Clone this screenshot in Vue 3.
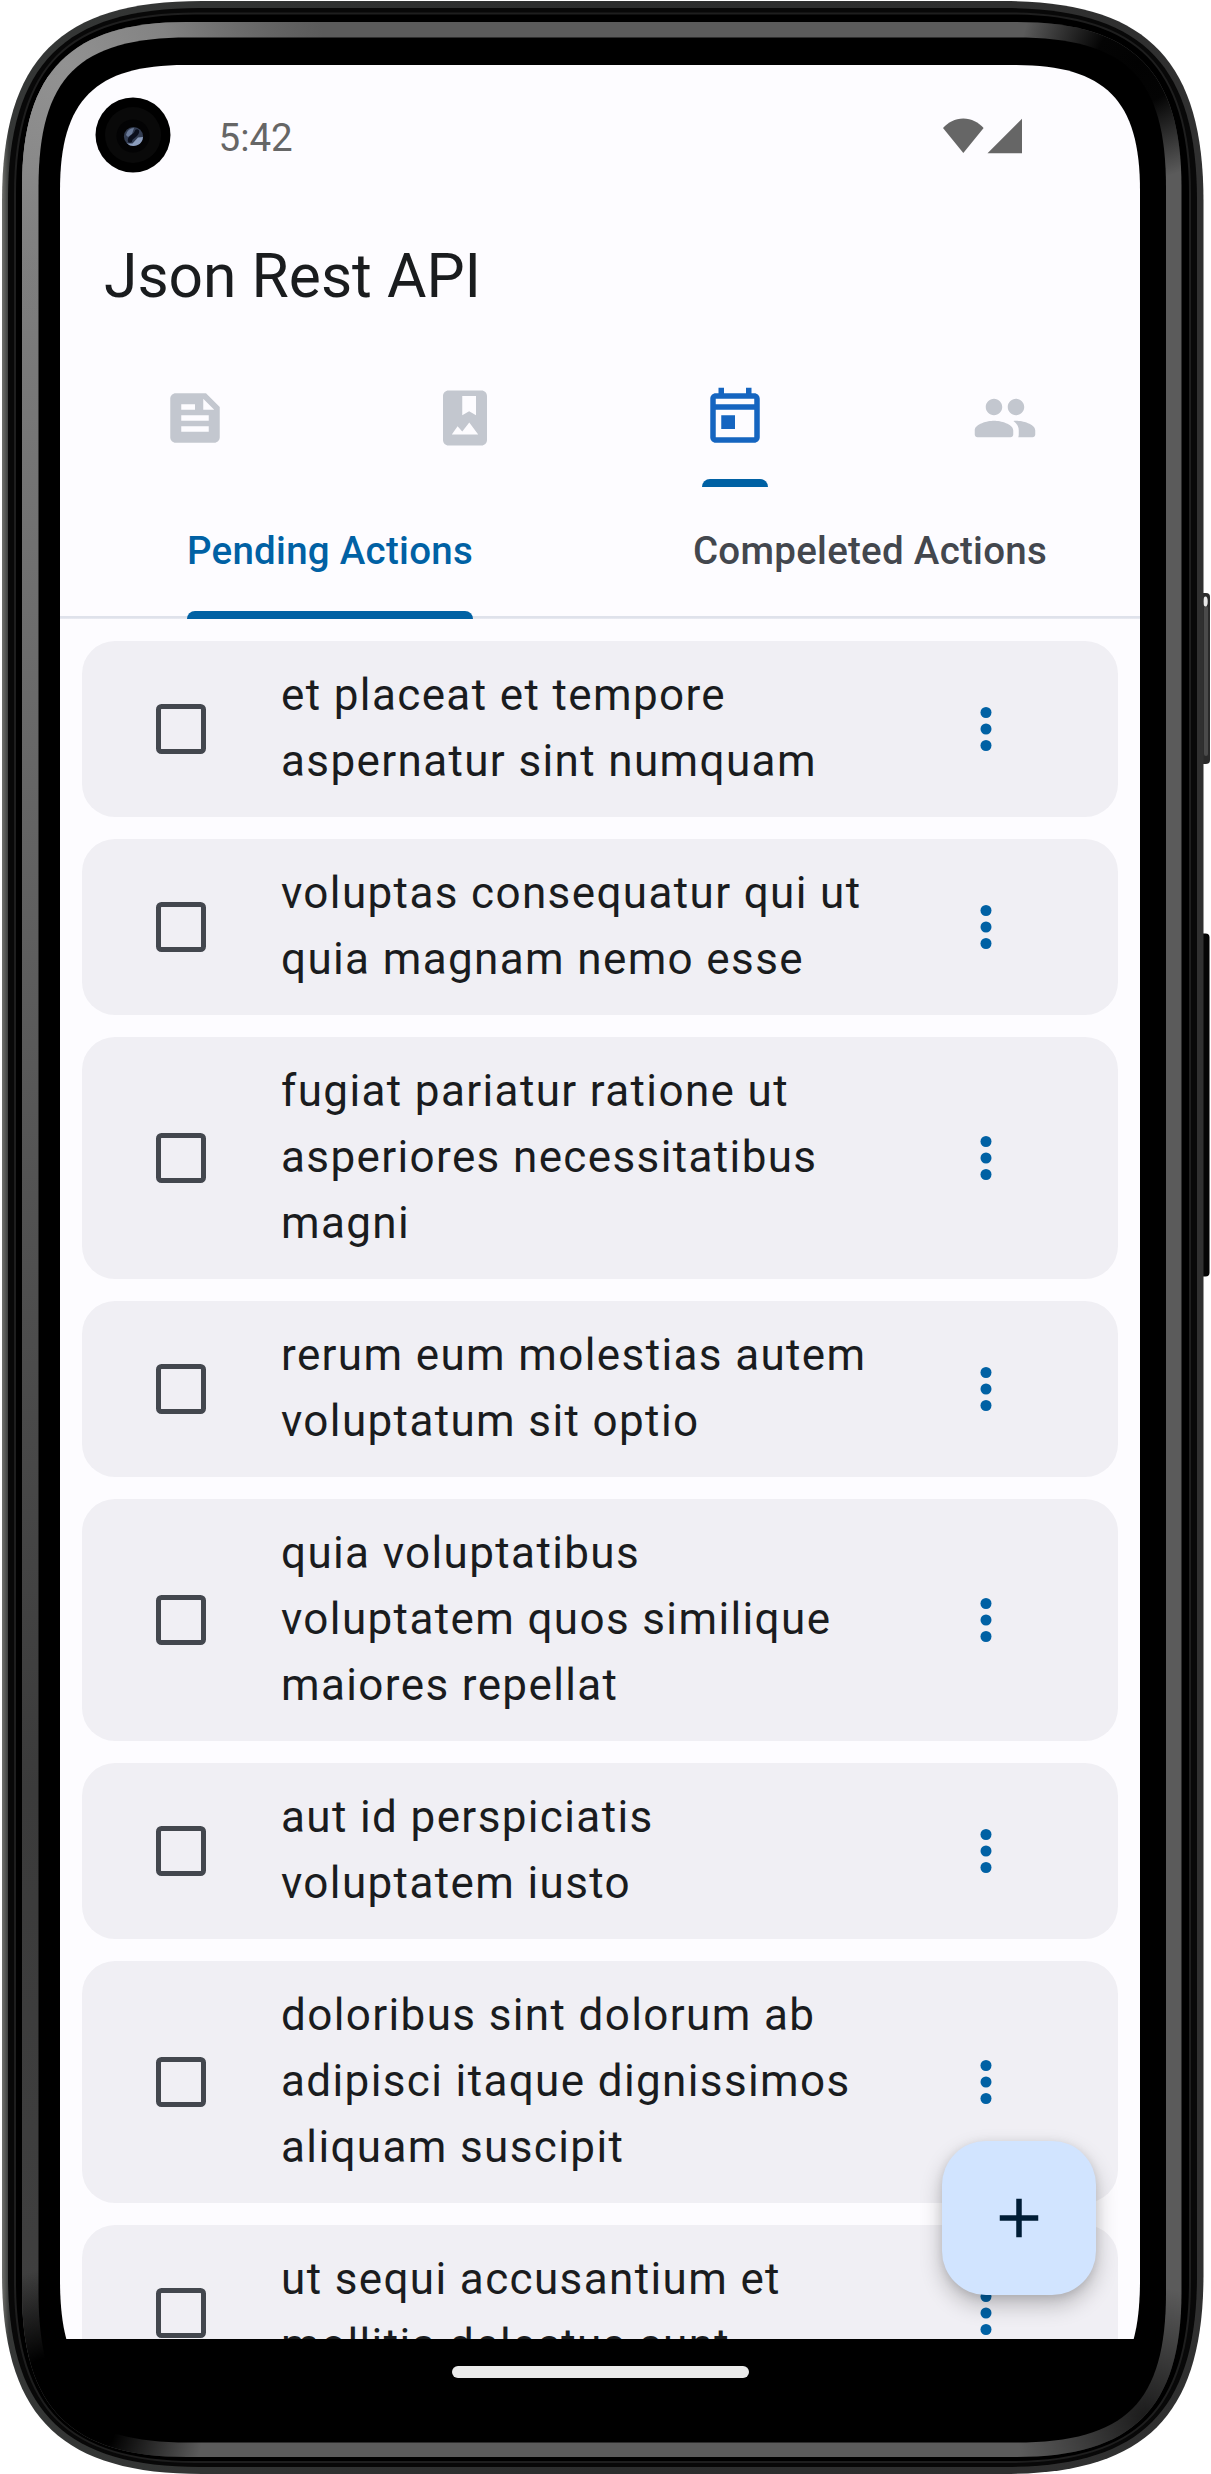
<script setup>
const items = [
  'et placeat et tempore\naspernatur sint numquam',
  'voluptas consequatur qui ut\nquia magnam nemo esse',
  'fugiat pariatur ratione ut\nasperiores necessitatibus\nmagni',
  'rerum eum molestias autem\nvoluptatum sit optio',
  'quia voluptatibus\nvoluptatem quos similique\nmaiores repellat',
  'aut id perspiciatis\nvoluptatem iusto',
  'doloribus sint dolorum ab\nadipisci itaque dignissimos\naliquam suscipit',
  'ut sequi accusantium et\nmollitia delectus sunt',
]

const tabs = [
  {
    name: 'posts',
    path: 'M16 3H5c-1.1 0-2 .9-2 2v14c0 1.1.9 2 2 2h14c1.1 0 2-.9 2-2V8l-5-5zM7 7h5v2H7V7zm10 10H7v-2h10v2zm0-4H7v-2h10v2zm-2-4V5l4 4h-4z',
  },
  {
    name: 'albums',
    path: 'M18 2H6c-1.1 0-2 .9-2 2v16c0 1.1.9 2 2 2h12c1.1 0 2-.9 2-2V4c0-1.1-.9-2-2-2zM11 4h5v7l-2.5-1.5L11 11zM7.2 18l2.1-3 1.7 1.9 2.55-3.3L16.8 18z',
  },
  {
    name: 'todos',
    active: true,
    path: 'M19 3h-1V1h-2v2H8V1H6v2H5c-1.11 0-1.99.9-1.99 2L3 19c0 1.1.89 2 2 2h14c1.1 0 2-.9 2-2V5c0-1.1-.9-2-2-2zm0 16H5V9h14v10zm0-12H5V5h14v2zM7 11h5v5H7v-5z',
  },
  {
    name: 'users',
    path: 'M16 11c1.66 0 2.99-1.34 2.99-3S17.66 5 16 5s-3 1.34-3 3 1.34 3 3 3zm-8 0c1.66 0 2.99-1.34 2.99-3S9.66 5 8 5 5 6.34 5 8s1.34 3 3 3zm0 2c-2.33 0-7 1.17-7 3.5V18c0 .55.45 1 1 1h12c.55 0 1-.45 1-1v-1.5c0-2.33-4.67-3.5-7-3.5zm8 0c-.29 0-.62.02-.97.05.02.01.03.03.04.04 1.14.83 1.93 1.94 1.93 3.41V18c0 .35-.07.69-.18 1H22c.55 0 1-.45 1-1v-1.5c0-2.33-4.67-3.5-7-3.5z',
  },
]

// Rounded rectangle with continuous corners: e = corner extent, c = control offset.
function squircle(l, t, r, b, e, c) {
  return `M${l} ${t + e}C${l} ${t + c} ${l + c} ${t} ${l + e} ${t}H${r - e}C${r - c} ${t} ${r} ${t + c} ${r} ${t + e}V${b - e}C${r} ${b - c} ${r - c} ${b} ${r - e} ${b}H${l + e}C${l + c} ${b} ${l} ${b - c} ${l} ${b - e}Z`
}
const body = squircle(2, 1, 1203.5, 2474, 200, 58)
const rim = squircle(8, 8, 1197, 2467, 192, 56)
const groove = squircle(15, 13.5, 1190, 2462, 180, 53)
const bevel = squircle(22, 22, 1181.5, 2457, 165, 49)
const bezel = squircle(38.5, 37.5, 1166, 2442.5, 150, 40)
</script>

<template>
  <div class="device">
    <svg class="frame" viewBox="0 0 1211 2474" aria-hidden="true">
      <defs>
        <linearGradient id="edge" x1="0" y1="0" x2="1" y2="0">
          <stop offset="0" stop-color="#70716d" />
          <stop offset=".006" stop-color="#353736" />
          <stop offset=".5" stop-color="#2c2d2d" />
          <stop offset="1" stop-color="#303030" />
        </linearGradient>
        <linearGradient id="leftShade" x1="0" y1="0" x2="0" y2="1">
          <stop offset="0" stop-color="#8c8c8c" />
          <stop offset=".12" stop-color="#7a7a7a" />
          <stop offset=".5" stop-color="#525252" />
          <stop offset=".75" stop-color="#3b3b3b" />
          <stop offset="1" stop-color="#404040" />
        </linearGradient>
        <radialGradient id="glow" gradientUnits="userSpaceOnUse" cx="65" cy="65" r="260">
          <stop offset="0" stop-color="#929292" />
          <stop offset=".4" stop-color="#8a8a8a" stop-opacity=".85" />
          <stop offset="1" stop-color="#777" stop-opacity="0" />
        </radialGradient>
        <radialGradient id="darkTop" gradientUnits="userSpaceOnUse" cx="1138" cy="62" r="118">
          <stop offset="0" stop-color="#020202" />
          <stop offset=".35" stop-color="#040404" />
          <stop offset="1" stop-color="#040404" stop-opacity="0" />
        </radialGradient>
        <radialGradient id="darkBottom" gradientUnits="userSpaceOnUse" cx="60" cy="2414" r="145">
          <stop offset="0" stop-color="#000" />
          <stop offset=".4" stop-color="#000" />
          <stop offset="1" stop-color="#000" stop-opacity="0" />
        </radialGradient>
        <radialGradient id="dimBottom" gradientUnits="userSpaceOnUse" cx="1145" cy="2416" r="130">
          <stop offset="0" stop-color="#000" stop-opacity=".7" />
          <stop offset="1" stop-color="#000" stop-opacity="0" />
        </radialGradient>
        <clipPath id="bevelClip"><path :d="bevel" /></clipPath>
      </defs>
      <rect x="1198" y="593" width="12" height="171" rx="4" fill="#2a2a2a" />
      <rect x="1204" y="606" width="4" height="150" rx="2" fill="#4a4a4a" />
      <ellipse cx="1205.5" cy="601.5" rx="2.2" ry="5" fill="#e8e8e8" />
      <rect x="1198" y="933.5" width="11.5" height="343" rx="4" fill="#040404" />
      <path :d="body" fill="url(#edge)" />
      <path :d="rim" fill="#080808" />
      <path :d="groove" fill="#000" stroke="#1e1e1e" stroke-width="2" />
      <g clip-path="url(#bevelClip)">
        <rect width="1211" height="2474" fill="#5b5b5b" />
        <rect y="75" width="100" height="2285" fill="url(#leftShade)" />
        <rect width="600" height="600" fill="url(#glow)" />
        <rect x="900" width="311" height="300" fill="url(#darkTop)" />
        <rect y="2200" width="400" height="274" fill="url(#darkBottom)" />
        <rect x="900" y="2200" width="311" height="274" fill="url(#dimBottom)" />
      </g>
      <path :d="bezel" fill="#000" />
    </svg>

    <main class="screen">
      <header class="status">
        <svg class="camera" viewBox="0 0 76 76" aria-hidden="true">
          <circle cx="38" cy="38" r="37.5" fill="#000" />
          <circle cx="38" cy="38" r="28" fill="#090909" />
          <circle cx="38" cy="39" r="16.5" fill="#030304" />
          <circle cx="38.5" cy="39.5" r="9.6" fill="#333d52" />
          <path d="M32 46.5a9.6 9.6 0 0 0 16-6.5l-5 .5-5.5 6z" fill="#8c9dbd" />
          <path d="M31 38a8 8 0 0 1 8-7l-2 6-4 3z" fill="#6b7b99" />
          <path d="M35 43.5c0-4 6-4 7-9" fill="none" stroke="#0b0f1c" stroke-width="4.5" stroke-linecap="round" />
        </svg>
        <span class="clock">5:42</span>
        <svg class="signals" viewBox="0 0 80 36" aria-hidden="true">
          <path d="M20.3 35 0 10C5 4.5 12 .5 20.3 .5S35.5 4.5 40.6 10z" />
          <path d="M44.5 35.3 79 .8v34.5z" />
        </svg>
      </header>

      <h1 class="title">Json Rest API</h1>

      <nav class="icon-tabs">
        <div v-for="tab in tabs" :key="tab.name" class="icon-tab" :class="{ active: tab.active }">
          <svg viewBox="0 0 24 24" aria-hidden="true"><path fill-rule="evenodd" :d="tab.path" /></svg>
          <i v-if="tab.active" class="indicator"></i>
        </div>
      </nav>

      <nav class="text-tabs">
        <div class="text-tab active"><span>Pending Actions<i class="indicator"></i></span></div>
        <div class="text-tab"><span>Compeleted Actions</span></div>
      </nav>

      <section class="list">
        <article v-for="item in items" :key="item" class="card">
          <span class="checkbox"></span>
          <p>{{ item }}</p>
          <svg class="more" viewBox="0 0 24 24" aria-hidden="true">
            <circle cx="12" cy="6" r="2" />
            <circle cx="12" cy="12" r="2" />
            <circle cx="12" cy="18" r="2" />
          </svg>
        </article>
      </section>

      <button class="fab" aria-label="Add">
        <svg viewBox="0 0 24 24" aria-hidden="true"><path d="M19 13h-6v6h-2v-6H5v-2h6V5h2v6h6z" /></svg>
      </button>
    </main>

    <footer class="gesture"><span></span></footer>
  </div>
</template>

<style>
body {
  background: #fff;
}
</style>

<style scoped>
.device {
  position: relative;
  box-sizing: border-box;
  width: 1211px;
  height: 2474px;
  padding: 65px 71px 69px 60px;
  overflow: hidden;
  font-family: Roboto, sans-serif;
}
.frame {
  position: absolute;
  inset: 0;
  width: 1211px;
  height: 2474px;
}
.screen {
  position: relative;
  display: flex;
  flex-direction: column;
  width: 1080px;
  height: 2274px;
  overflow: hidden;
  background: #fdfcff;
  clip-path: path('M0 125C0 35 35 0 125 0H955C1045 0 1080 35 1080 125V2215C1080 2238 1078 2258 1073.7 2274H6.3C2 2258 0 2238 0 2215Z');
}
.status {
  display: flex;
  flex: none;
  box-sizing: border-box;
  align-items: flex-start;
  height: 127px;
  padding: 31.5px 117px 0 34.5px;
}
.camera {
  width: 76px;
  height: 76px;
}
.clock {
  margin-left: 48px;
  padding-top: 18.5px;
  color: #666;
  font-size: 38.5px;
  line-height: 46px;
}
.signals {
  width: 80px;
  height: 36px;
  margin-top: 21px;
  margin-left: auto;
  fill: #666;
}
.title {
  flex: none;
  box-sizing: border-box;
  height: 163px;
  margin: 0;
  padding-left: 44px;
  color: #1a1c1e;
  font-size: 60.5px;
  font-weight: 400;
  line-height: 170px;
}
.icon-tabs {
  display: flex;
  flex: none;
  height: 132px;
}
.icon-tab {
  position: relative;
  display: flex;
  flex: 1;
  justify-content: center;
  padding-top: 30px;
}
.icon-tab svg {
  width: 66px;
  height: 66px;
  fill: #c3c7cf;
}
.icon-tab.active svg {
  fill: #1565c0;
}
.indicator {
  position: absolute;
  bottom: 0;
  left: 0;
  width: 100%;
  height: 8.25px;
  border-radius: 8.25px 8.25px 0 0;
  background: #0061a4;
}
.icon-tab .indicator {
  left: 102px;
  width: 66px;
}
.text-tabs {
  display: flex;
  flex: none;
  box-sizing: border-box;
  height: 132px;
  background: linear-gradient(#dfe2eb, #dfe2eb) bottom / 100% 2.75px no-repeat;
}
.text-tab {
  display: flex;
  flex: 1;
  justify-content: center;
  color: #43474e;
  font-size: 38.5px;
  font-weight: 500;
  letter-spacing: 0.275px;
  line-height: 128px;
}
.text-tab span {
  position: relative;
  height: 132px;
}
.text-tab.active {
  color: #0061a4;
}
.list {
  display: flex;
  flex-direction: column;
  gap: 22px;
  padding: 22px;
}
.card {
  display: flex;
  flex: none;
  align-items: center;
  padding: 22px 99px 22px 74px;
  border-radius: 33px;
  background: #f0eff4;
}
.checkbox {
  flex: none;
  box-sizing: border-box;
  width: 50px;
  height: 50px;
  border: 5.5px solid #43474e;
  border-radius: 5.5px;
}
.card p {
  flex: 1;
  margin: -1px 0 1px 75px;
  color: #1a1c1e;
  font-size: 44px;
  letter-spacing: 1.375px;
  line-height: 66px;
  white-space: pre-line;
}
.more {
  flex: none;
  width: 66px;
  height: 66px;
  fill: #0061a4;
}
.fab {
  position: absolute;
  right: 44px;
  bottom: 44px;
  display: flex;
  align-items: center;
  justify-content: center;
  width: 154px;
  height: 154px;
  padding: 0;
  border: 0;
  border-radius: 44px;
  background: #d1e4ff;
  box-shadow: 0 10px 22px rgba(0, 0, 0, 0.24), 0 2px 10px rgba(0, 0, 0, 0.1);
}
.fab svg {
  width: 66px;
  height: 66px;
  fill: #001d36;
}
.gesture {
  position: relative;
  display: flex;
  justify-content: center;
  box-sizing: border-box;
  width: 1080px;
  height: 66px;
  padding-top: 27px;
}
.gesture span {
  width: 297px;
  height: 12px;
  border-radius: 6px;
  background: #ebebeb;
}
</style>
